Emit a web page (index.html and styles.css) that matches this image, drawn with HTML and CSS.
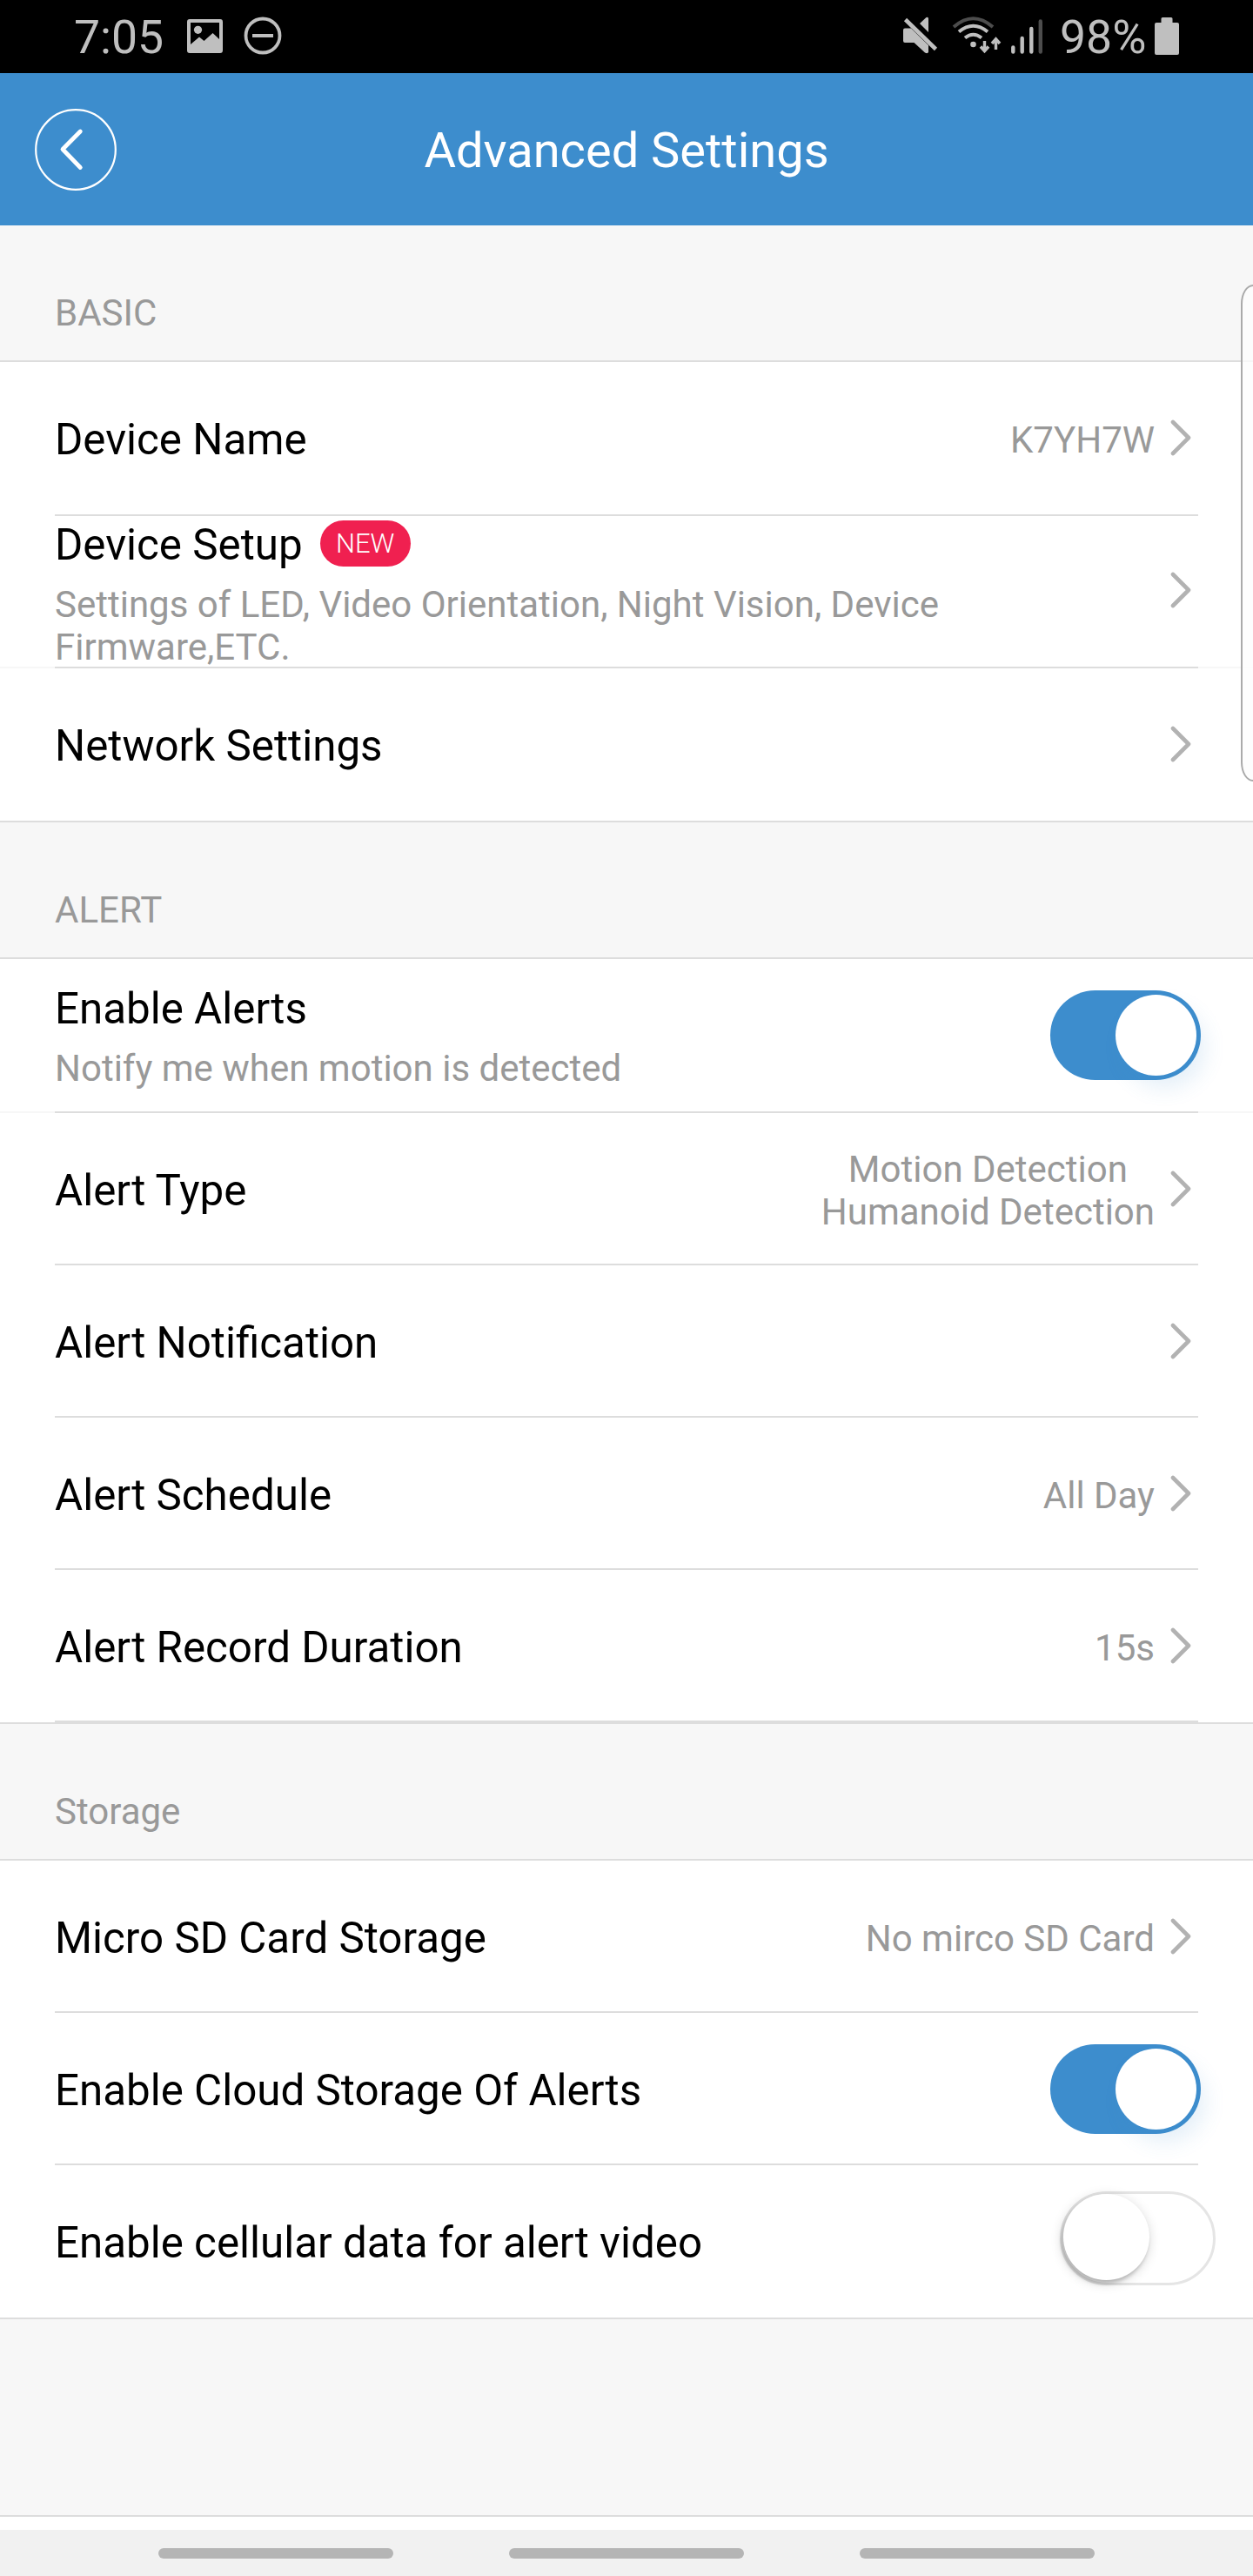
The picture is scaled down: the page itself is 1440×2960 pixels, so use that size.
FILE: index.html
```html
<!DOCTYPE html>
<html lang="en">
<head>
    <meta charset="UTF-8">
    <meta name="viewport" content="width=device-width, initial-scale=1.0">
    <title>Advanced Settings</title>
    <link rel="stylesheet" href="styles.css">
</head>
<body>
    <svg class="defs" width="0" height="0">
        <symbol id="chevron" viewBox="0 0 24 42">
            <path d="M3 3 L21 21 L3 39" fill="none" stroke="#b2b2b2" stroke-width="4.6" stroke-linecap="round" stroke-linejoin="round"/>
        </symbol>
    </svg>

    <div class="status-bar">
        <span class="clock">7:05</span>
        <svg class="icon-photo" width="42" height="40" viewBox="215 22 42 40">
            <path fill="#bfbfbf" fill-rule="evenodd" d="M218 22H253Q256 22 256 25V58Q256 61 253 61H218Q215 61 215 58V25Q215 22 218 22ZM219 26V51L229 42.500L234.500 47L244.500 38L252 45V26Z"/>
            <circle cx="227.500" cy="34.300" r="4.600" fill="#bfbfbf"/>
        </svg>
        <svg class="icon-dnd" width="44" height="44" viewBox="0 0 44 44">
            <circle cx="22" cy="22" r="19.500" fill="none" stroke="#bfbfbf" stroke-width="3.800"/>
            <path d="M10 22H34" stroke="#bfbfbf" stroke-width="4"/>
        </svg>

        <div class="status-right">
            <svg width="168" height="44" viewBox="1036 19 168 44">
                <!-- muted speaker -->
                <path fill="#bfbfbf" d="M1040 32.500H1047L1067 52V60Q1066 62 1063 60.500L1050.500 49H1040Q1038 49 1038 47V34.500Q1038 32.500 1040 32.500ZM1057 27L1064.500 20Q1067 19 1067 21.500V37Z"/>
                <path d="M1040.500 22.500L1075.500 56.500" stroke="#bfbfbf" stroke-width="4.600"/>
                <!-- wifi -->
                <g fill="none" stroke="#bfbfbf" stroke-width="4">
                    <path d="M1096 31Q1118.500 11.500 1141 31" stroke="#4d4d4d"/>
                    <path d="M1102 36.500Q1118.500 23 1135 36.500"/>
                    <path d="M1109 43.500Q1118.500 36 1128 43.500"/>
                    <path d="M1131.500 47V58M1144.500 57V46" stroke-width="3.400"/>
                    <path d="M1127 53.500L1131.500 58.500L1136 53.500M1140 50L1144.500 45L1149 50" stroke-width="3.600"/>
                </g>
                <circle cx="1118.500" cy="51" r="3.300" fill="#bfbfbf"/>
                <!-- signal -->
                <g stroke="#bfbfbf" stroke-width="4.400" stroke-linecap="round">
                    <path d="M1164.300 54.500V59.500M1174.700 44V59.500M1185.300 33V59.500"/>
                    <path d="M1195.800 24.500V59.500" stroke="#4d4d4d"/>
                </g>
            </svg>
            <span class="battery-text">98%</span>
            <svg width="28" height="43" viewBox="0 0 28 43">
                <path fill="#bfbfbf" d="M9 0H19Q20.500 0 20.500 1.500V6H26Q28 6 28 8V41Q28 43 26 43H2Q0 43 0 41V8Q0 6 2 6H7.500V1.500Q7.500 0 9 0Z"/>
            </svg>
        </div>
    </div>

    <header class="title-bar">
        <a class="back" href="#" aria-label="Back">
            <svg width="94" height="94" viewBox="0 0 94 94" fill="none" stroke="#fff">
                <circle cx="47" cy="47" r="45.800" stroke-width="2.200"/>
                <path d="M52.300 26L32 46.500L52.300 67.500" stroke-width="4.800" stroke-linecap="round" stroke-linejoin="round"/>
            </svg>
        </a>
        <h1>Advanced Settings</h1>
    </header>

    <main>
        <h2>BASIC</h2>
        <ul class="group">
            <li class="row row-first">
                <span class="label">Device Name</span>
                <span class="value">K7YH7W</span>
                <svg class="chevron"><use href="#chevron"/></svg>
            </li>
            <li class="row row-short row-split">
                <div class="label">
                    <div class="label-line">Device Setup <span class="badge">NEW</span></div>
                    <p class="desc">Settings of LED, Video Orientation, Night Vision, Device Firmware,ETC.</p>
                </div>
                <svg class="chevron"><use href="#chevron"/></svg>
            </li>
            <li class="row row-plain">
                <span class="label">Network Settings</span>
                <svg class="chevron"><use href="#chevron"/></svg>
            </li>
        </ul>

        <h2>ALERT</h2>
        <ul class="group">
            <li class="row row-first row-split">
                <div class="label">
                    <div class="label-line">Enable Alerts</div>
                    <p class="desc">Notify me when motion is detected</p>
                </div>
                <span class="toggle on"></span>
            </li>
            <li class="row">
                <span class="label">Alert Type</span>
                <span class="value">Motion Detection<br>Humanoid Detection</span>
                <svg class="chevron"><use href="#chevron"/></svg>
            </li>
            <li class="row">
                <span class="label">Alert Notification</span>
                <svg class="chevron"><use href="#chevron"/></svg>
            </li>
            <li class="row">
                <span class="label">Alert Schedule</span>
                <span class="value">All Day</span>
                <svg class="chevron"><use href="#chevron"/></svg>
            </li>
            <li class="row">
                <span class="label">Alert Record Duration</span>
                <span class="value">15s</span>
                <svg class="chevron"><use href="#chevron"/></svg>
            </li>
        </ul>

        <h2>Storage</h2>
        <ul class="group">
            <li class="row">
                <span class="label">Micro SD Card Storage</span>
                <span class="value">No mirco SD Card</span>
                <svg class="chevron"><use href="#chevron"/></svg>
            </li>
            <li class="row">
                <span class="label">Enable Cloud Storage Of Alerts</span>
                <span class="toggle on"></span>
            </li>
            <li class="row row-plain">
                <span class="label">Enable cellular data for alert video</span>
                <span class="toggle off"></span>
            </li>
        </ul>
    </main>

    <footer class="nav-bar">
        <span></span>
        <span></span>
        <span></span>
    </footer>

    <div class="edge-panel"></div>
</body>
</html>
```

FILE: styles.css
```css
* {
    box-sizing: border-box;
}
body {
    margin: 0;
    width: 1440px;
    height: 2960px;
    position: relative;
    overflow: hidden;
    display: flex;
    flex-direction: column;
    background: #f7f7f7;
    color: #000;
    font-family: Roboto, sans-serif;
    font-size: 49.3px;
}
.defs {
    position: absolute;
}

/* status bar */
.status-bar {
    display: flex;
    align-items: center;
    height: 84px;
    padding: 0 85px 2px 84px;
    background: #000;
    color: #bfbfbf;
    font-size: 53.5px;
}
.clock {
    width: 131px;
    padding: 2px 0 0 1px;
}
.icon-photo {
    margin-top: 2px;
}
.icon-dnd {
    margin-left: 23px;
}
.status-right {
    display: flex;
    align-items: center;
    margin-left: auto;
}
.battery-text {
    width: 109px;
    margin-left: 14px;
    padding-top: 2px;
}

/* title bar */
.title-bar {
    display: grid;
    grid-template-columns: 94px 1fr 94px;
    align-items: center;
    height: 175px;
    padding: 0 40px;
    background: #3d8dcd;
    color: #fff;
}
.back svg {
    display: block;
}
h1 {
    margin: 0;
    padding-top: 3px;
    font-size: 56px;
    font-weight: 400;
    text-align: center;
}

/* settings list */
h2 {
    margin: 0;
    height: 155px;
    padding: 76px 63px 0;
    color: #999;
    font-size: 42px;
    font-weight: 400;
    line-height: 49px;
}
.group {
    margin: 0;
    padding: 0;
    list-style: none;
    border-top: 2px solid #ddd;
    border-bottom: 2px solid #ddd;
}
.row {
    display: flex;
    align-items: center;
    height: 175px;
    padding: 0 63px;
    background: linear-gradient(#ddd, #ddd) 63px 100% / 1314px 2px no-repeat #fff;
}
.row-first {
    height: 177px;
    padding-bottom: 2px;
}
.row-short {
    padding-bottom: 4px;
}
.row-split {
    background: linear-gradient(#ddd, #ddd) 63px 100% / 1314px 2px no-repeat,
        linear-gradient(#f7f7f7, #f7f7f7) 0 100% / 100% 2px no-repeat #fff;
}
.row-plain {
    background: #fff;
}
.label {
    flex: 1;
    padding-top: 3px;
    line-height: 57px;
}
.row-short .label {
    padding-top: 8px;
}
.label-line {
    display: flex;
    align-items: center;
    height: 57px;
}
.badge {
    width: 104px;
    height: 53px;
    margin: -4px 0 0 20px;
    border-radius: 27px;
    background: #f02050;
    color: #fff;
    font-size: 31px;
    font-weight: 300;
    line-height: 54px;
    text-align: center;
}
.desc {
    margin: 15px 0 0;
    color: #999;
    font-size: 42px;
    line-height: 49px;
}
.value {
    padding-top: 3px;
    color: #999;
    font-size: 42px;
    line-height: 49px;
    text-align: center;
}
.chevron {
    width: 24px;
    height: 42px;
    margin: 0 8px 2px 18px;
}

/* switches */
.toggle {
    display: flex;
    align-items: center;
    width: 173px;
    height: 103px;
    margin-right: -3px;
    padding: 0 5px;
    border-radius: 52px;
}
.toggle::before {
    content: "";
    width: 93px;
    height: 93px;
    border-radius: 50%;
    background: #fff;
}
.toggle.on {
    justify-content: flex-end;
    background: #3d8dcd;
}
.toggle.on::before {
    box-shadow: 10px 14px 24px rgba(61, 141, 205, 0.14);
}
.toggle.off {
    width: 179px;
    height: 108px;
    margin: 0 -20px 7px 0;
    padding: 0 0 4px 1px;
    border: 3px solid #e5e5e5;
    border-radius: 54px;
}
.toggle.off::before {
    width: 99px;
    height: 99px;
    box-shadow: -2px 4px 4px rgba(0, 0, 0, 0.2), -1px 3px 14px rgba(0, 0, 0, 0.18);
}

/* bottom navigation */
.nav-bar {
    display: flex;
    justify-content: center;
    align-items: center;
    gap: 133px;
    height: 70px;
    margin-top: auto;
    padding-top: 16px;
    border-top: 2px solid #ddd;
    background: linear-gradient(#fff, #fff) 0 0 / 100% 15px no-repeat #f1f1f1;
}
.nav-bar span {
    width: 270px;
    height: 12px;
    border-radius: 6px;
    background: #b5b5b5;
}

/* edge handle, half off screen */
.edge-panel {
    position: absolute;
    top: 327px;
    right: -16px;
    width: 30px;
    height: 571px;
    border: 2px solid #aaa;
    border-radius: 14px / 22px;
    background: rgba(252, 252, 252, 0.8);
}
```
